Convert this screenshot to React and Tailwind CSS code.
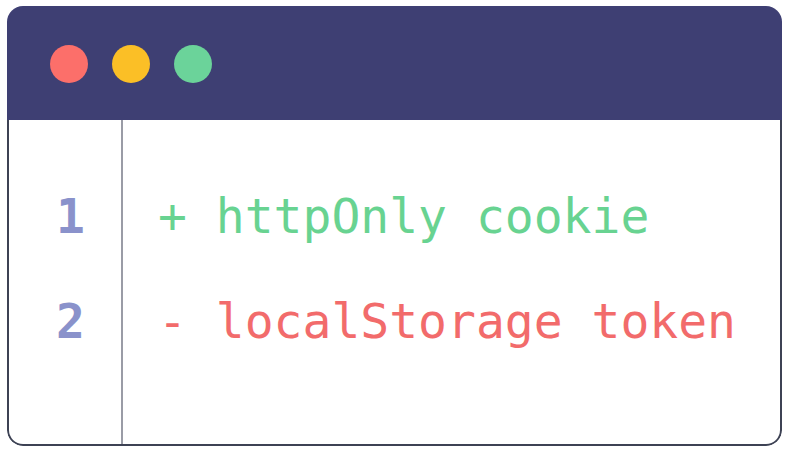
export default function App() {
  const mono = { fontFamily: '"DejaVu Sans Mono", "Liberation Mono", monospace' };
  return (
    <div className="w-[790px] h-[454px] bg-white pl-[7px] pt-[6px]">
      <div className="w-[775px] h-[440px] flex flex-col rounded-[16px] overflow-hidden">
        <div className="h-[114px] bg-[#3e3f73] flex items-start gap-[24px] pl-[43px] pt-[39px] shrink-0">
          <div className="w-[38px] h-[38px] rounded-full bg-[#fc6f6a]" />
          <div className="w-[38px] h-[38px] rounded-full bg-[#fbbf26]" />
          <div className="w-[38px] h-[38px] rounded-full bg-[#6bd39a]" />
        </div>
        <div className="flex-1 flex border-x-2 border-b-2 border-[#3d4254] rounded-b-[16px] bg-white">
          <div
            className="w-[114px] border-r-2 border-[#9a9ca6] pt-[44px] pl-[47px] text-[48px] leading-[105px] text-[#8a92cb] font-semibold"
            style={mono}
          >
            <div>1</div>
            <div>2</div>
          </div>
          <div className="pl-[35px] pt-[44px] text-[48px] leading-[105px] whitespace-pre" style={mono}>
            <div className="text-[#68d391]">+ httpOnly cookie</div>
            <div className="text-[#f26b6b]">- localStorage token</div>
          </div>
        </div>
      </div>
    </div>
  );
}
